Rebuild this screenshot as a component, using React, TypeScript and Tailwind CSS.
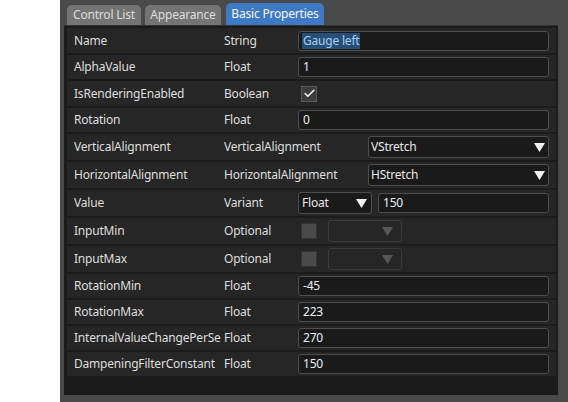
import { Check } from 'lucide-react';

type Row = {
  name: string;
  type: string;
  kind: 'text' | 'bool' | 'combo' | 'variant' | 'optional';
  value?: string;
  h: string;
};

const rows: Row[] = [
  { name: 'Name', type: 'String', kind: 'text', value: 'Gauge left', h: 'h-[25px]' },
  { name: 'AlphaValue', type: 'Float', kind: 'text', value: '1', h: 'h-[24px]' },
  { name: 'IsRenderingEnabled', type: 'Boolean', kind: 'bool', h: 'h-[25px]' },
  { name: 'Rotation', type: 'Float', kind: 'text', value: '0', h: 'h-[24px]' },
  { name: 'VerticalAlignment', type: 'VerticalAlignment', kind: 'combo', value: 'VStretch', h: 'h-[26px]' },
  { name: 'HorizontalAlignment', type: 'HorizontalAlignment', kind: 'combo', value: 'HStretch', h: 'h-[26px]' },
  { name: 'Value', type: 'Variant', kind: 'variant', value: '150', h: 'h-[26px]' },
  { name: 'InputMin', type: 'Optional', kind: 'optional', h: 'h-[26px]' },
  { name: 'InputMax', type: 'Optional', kind: 'optional', h: 'h-[26px]' },
  { name: 'RotationMin', type: 'Float', kind: 'text', value: '-45', h: 'h-[24px]' },
  { name: 'RotationMax', type: 'Float', kind: 'text', value: '223', h: 'h-[24px]' },
  { name: 'InternalValueChangePerSe', type: 'Float', kind: 'text', value: '270', h: 'h-[24px]' },
  { name: 'DampeningFilterConstant', type: 'Float', kind: 'text', value: '150', h: 'h-[24px]' },
];

function Arrow({ dim }: { dim?: boolean }) {
  return (
    <svg width="11" height="9" viewBox="0 0 11 9" className="shrink-0">
      <path d="M0 0 H11 L5.5 9 Z" fill={dim ? '#575757' : '#f2f2f2'} />
    </svg>
  );
}

function Input({ value, selected }: { value: string; selected?: boolean }) {
  return (
    <div className="flex-1 h-[20px] flex items-center px-[3px] bg-[#1a1a1a] border border-[#4e4e4e] rounded-[3px] text-[#e8eef6]">
      {selected ? <span className="bg-[#264f78] text-[#a9cdf2] leading-[16px] px-[1px]">{value}</span> : <span className="px-[1px]">{value}</span>}
    </div>
  );
}

function Editor({ row }: { row: Row }) {
  if (row.kind === 'text') return <Input value={row.value!} selected={row.name === 'Name'} />;
  if (row.kind === 'bool')
    return (
      <div className="ml-[3px] w-[16px] h-[16px] bg-[#3c3c3c] border border-[#5a5a5a] flex items-center justify-center">
        <Check size={13} strokeWidth={3} color="#f4f4f4" />
      </div>
    );
  if (row.kind === 'combo')
    return (
      <div className="ml-[70px] flex-1 h-[22px] flex items-center justify-between pl-[2px] pr-[3px] bg-[#1a1a1a] border border-[#4e4e4e] rounded-[3px] text-[#e8e8e8]">
        <span>{row.value}</span>
        <Arrow />
      </div>
    );
  if (row.kind === 'variant')
    return (
      <div className="flex-1 flex items-center gap-[6px]">
        <div className="w-[74px] h-[22px] flex items-center justify-between pl-[3px] pr-[4px] bg-[#1a1a1a] border border-[#4e4e4e] rounded-[3px] text-[#e8e8e8]">
          <span>Float</span>
          <Arrow />
        </div>
        <Input value={row.value!} />
      </div>
    );
  return (
    <div className="flex items-center">
      <div className="ml-[3px] w-[16px] h-[16px] bg-[#4a4a4a] border border-[#333]" />
      <div className="ml-[11px] w-[74px] h-[22px] flex items-center justify-end pr-[8px] border border-[#3a3a3a] rounded-[3px]">
        <Arrow dim />
      </div>
    </div>
  );
}

export default function App() {
  return (
    <div className="w-[568px] h-[402px] flex bg-white overflow-hidden text-[12px] tracking-[-0.2px] font-['Noto_Sans','Open_Sans',sans-serif]">
      <div className="w-[60px]" />
      <div className="flex-1 flex flex-col bg-[#4a4a4a]">
        <div className="h-[25px] flex items-end pl-[7px]">
          <div className="w-[74px] h-[20px] mr-[4px] rounded-t-[5px] bg-[#747474] text-[#dcdcdc] flex items-center justify-center">Control List</div>
          <div className="w-[76px] h-[20px] mr-[5px] rounded-t-[5px] bg-[#747474] text-[#dcdcdc] flex items-center justify-center">Appearance</div>
          <div className="w-[98px] h-[22px] rounded-t-[5px] bg-[#3d79c4] text-[#f4f4f4] flex items-center justify-center">Basic Properties</div>
        </div>
        <div className="ml-[4px] mr-[10px] mb-[7px] flex-1 bg-[#1b1b1b] border-t border-[#333] pt-[2px] pl-[3px] pr-[2px] flex flex-col gap-[2px]">
          {rows.map(r => (
            <div key={r.name} className={`${r.h} flex items-center bg-[#262626] text-[#dedede] pr-[7px]`}>
              <div className="w-[150px] ml-[7px] whitespace-nowrap overflow-hidden">{r.name}</div>
              <div className="w-[74px] whitespace-nowrap">{r.type}</div>
              <Editor row={r} />
            </div>
          ))}
        </div>
      </div>
    </div>
  );
}
